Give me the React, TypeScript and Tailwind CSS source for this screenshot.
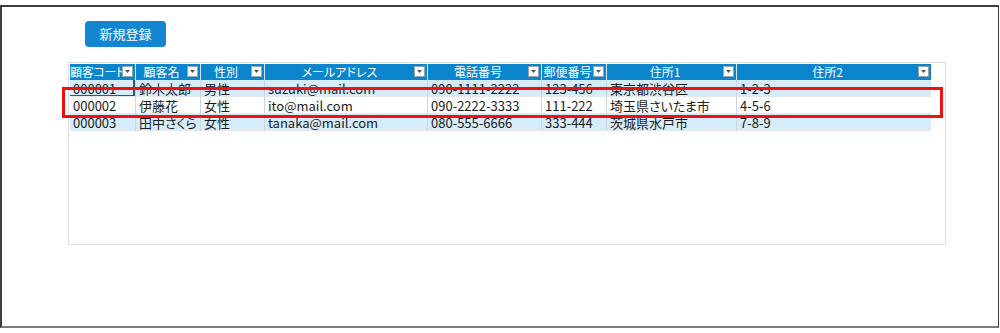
import React from 'react';

const cols = ['顧客コード', '顧客名', '性別', 'メールアドレス', '電話番号', '郵便番号', '住所1', '住所2'];

const rows = [
  ['000001', '鈴木太郎', '男性', 'suzuki@mail.com', '090-1111-2222', '123-456', '東京都渋谷区', '1-2-3'],
  ['000002', '伊藤花', '女性', 'ito@mail.com', '090-2222-3333', '111-222', '埼玉県さいたま市', '4-5-6'],
  ['000003', '田中さくら', '女性', 'tanaka@mail.com', '080-555-6666', '333-444', '茨城県水戸市', '7-8-9'],
];

function FilterButton() {
  return (
    <span className="absolute right-[2px] top-[2px] flex h-[11px] w-[11px] items-center justify-center border border-[#9aa4ad] bg-white">
      <svg width="5" height="3" viewBox="0 0 5 3">
        <path d="M0 0h5L2.5 3z" fill="#555" />
      </svg>
    </span>
  );
}

export default function App() {
  return (
    <div
      className="h-[333px] w-[1000px] bg-white pt-[5px] [font-feature-settings:'palt']"
      style={{ fontFamily: '"Noto Sans CJK JP", "Noto Sans", sans-serif' }}
    >
      <div className="relative h-[323px] w-[999px] border-2 border-r-[1px] border-b-[2px] border-[#3d3d3d] border-b-[#7a7a7a] bg-white">
        <div className="pl-[83px] pt-[14px]">
          <button className="flex h-[26px] w-[81px] items-center justify-center rounded-[4px] bg-[#1485d1] text-[13px] text-white">
            新規登録
          </button>
        </div>

        <div className="ml-[66px] mt-[15px] h-[183px] w-[878px] border border-[#dedede] pl-px pt-px">
          <div className="grid w-[861px] grid-cols-[65px_65px_64px_163px_114px_65px_130px_195px] text-[13px] leading-[16px]">
            {cols.map((c, i) => (
              <div
                key={c}
                className={`relative h-[16px] overflow-hidden whitespace-nowrap bg-[#0b85cc] text-[12px] text-white ${i === 0 ? 'text-left tracking-[-0.3px]' : 'pr-[13px] text-center'} ${i > 0 ? 'border-l border-[#d9e6f2]' : ''}`}
              >
                {c}
                <FilterButton />
              </div>
            ))}
            {rows.map((r, ri) =>
              r.map((v, ci) => (
                <div
                  key={ri + '-' + ci}
                  className={`h-[17px] overflow-hidden whitespace-nowrap border-b border-[#e3e8ee] pl-[3px] leading-[17px] text-[#1a1a1a] ${ri === 1 ? 'bg-white' : 'bg-[#d6ecfa]'} ${ci > 0 ? 'border-l border-l-[#c9d7e2]' : ''} ${ri === 0 && ci === 0 ? 'shadow-[inset_-2px_0_0_#2c5777,inset_0_-1px_0_#2c5777]' : ''}`}
                >
                  {v}
                </div>
              ))
            )}
          </div>
        </div>

        {/* annotation box */}
        <div className="absolute left-[60px] top-[80px] h-[31px] w-[881px] border-[3px] border-[#f01010]" />
      </div>
    </div>
  );
}
